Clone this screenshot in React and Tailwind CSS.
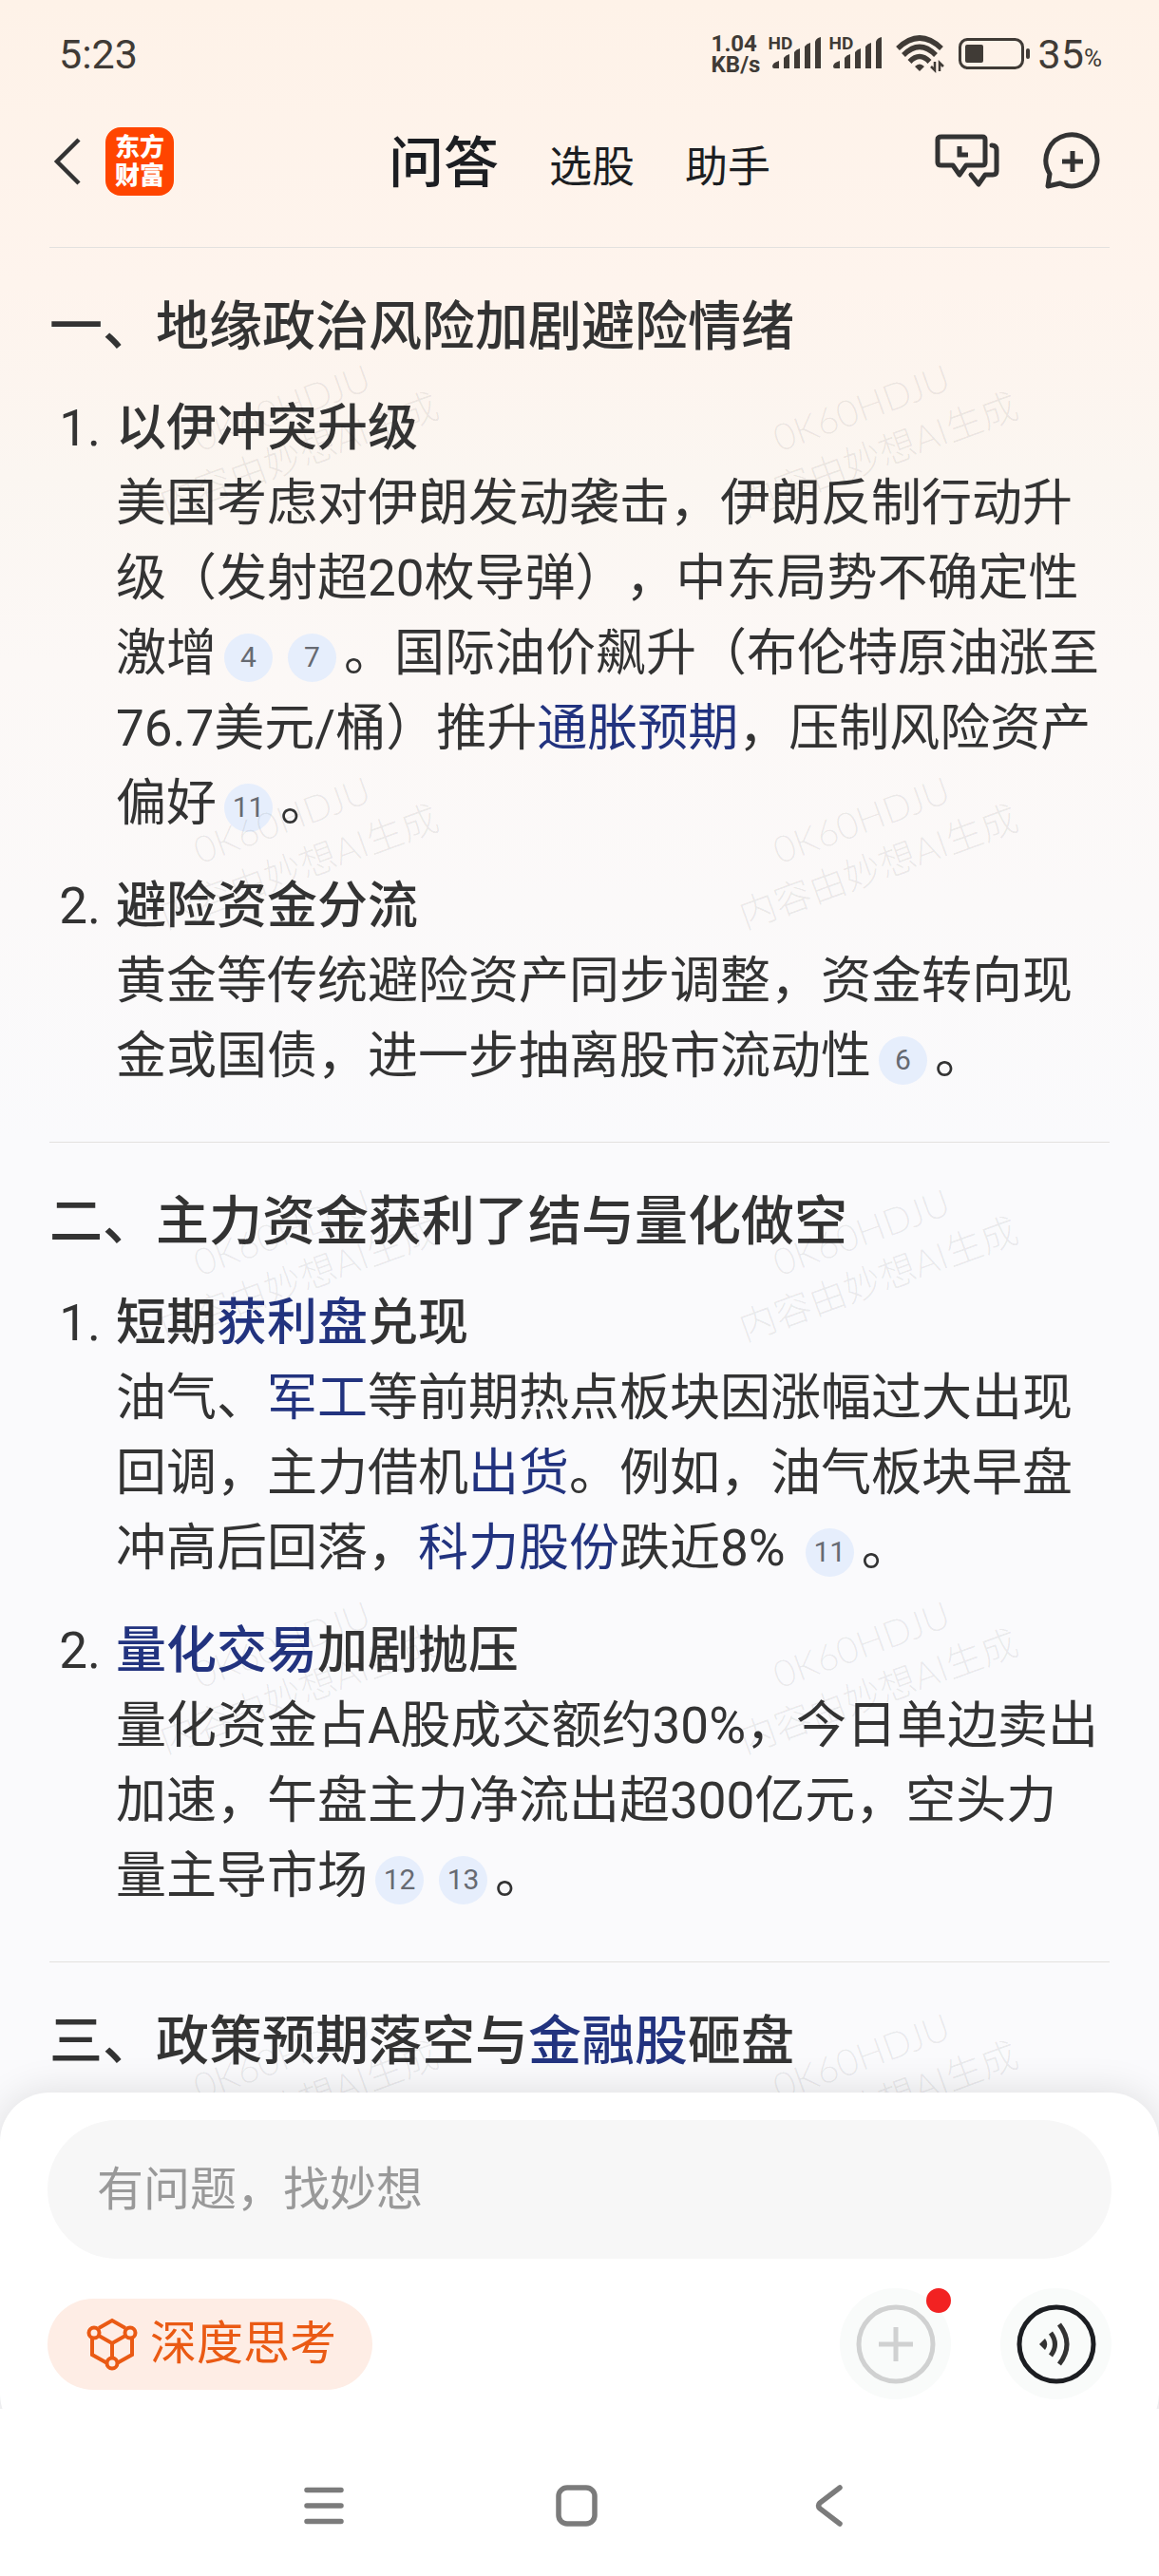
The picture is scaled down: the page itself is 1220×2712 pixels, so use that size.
const sections = [
  {
    title: ["一、地缘政治风险加剧避险情绪"],
    items: [
      {
        title: ["以伊冲突升级"],
        body: [
          "美国考虑对伊朗发动袭击，伊朗反制行动升级（发射超20枚导弹），中东局势不确定性激增",
          { refs: [4, 7] },
          "。国际油价飙升（布伦特原油涨至76.7美元/桶）推升",
          { link: "通胀预期" },
          "，压制风险资产偏好",
          { refs: [11] },
          "。",
        ],
      },
      {
        title: ["避险资金分流"],
        body: [
          "黄金等传统避险资产同步调整，资金转向现金或国债，进一步抽离股市流动性",
          { refs: [6] },
          "。",
        ],
      },
    ],
  },
  {
    title: ["二、主力资金获利了结与量化做空"],
    items: [
      {
        title: ["短期", { link: "获利盘" }, "兑现"],
        body: [
          "油气、",
          { link: "军工" },
          "等前期热点板块因涨幅过大出现回调，主力借机",
          { link: "出货" },
          "。例如，油气板块早盘冲高后回落，",
          { link: "科力股份" },
          "跌近8% ",
          { refs: [11] },
          "。",
        ],
      },
      {
        title: [{ link: "量化交易" }, "加剧抛压"],
        body: [
          "量化资金占A股成交额约30%，今日单边卖出加速，午盘主力净流出超300亿元，空头力量主导市场",
          { refs: [12, 13] },
          "。",
        ],
      },
    ],
  },
  {
    title: ["三、政策预期落空与", { link: "金融股" }, "砸盘"],
    items: [],
  },
];

const tabs = ["问答", "选股", "助手"];

// Plain strings, stock/term links and numbered source badges
function RichText({ parts }) {
  return parts.map((part, i) => {
    if (typeof part === "string") return part;
    if (part.link) {
      return (
        <a key={i} href="#" className="text-[#22337f]">
          {part.link}
        </a>
      );
    }
    return part.refs.map((n) => (
      <button
        key={n}
        className="mx-2 inline-flex size-[51px] items-center justify-center rounded-full bg-[#e6eefc] align-[4px] text-[30px] leading-none text-[#666a72]"
      >
        {n}
      </button>
    ));
  });
}

function Signal() {
  return (
    <div className="relative h-10 w-[56px]">
      <span className="absolute left-0 top-0 text-[19px] font-bold leading-[18px]">HD</span>
      <svg className="absolute bottom-1 right-0" width="52" height="34" viewBox="0 0 52 34" fill="currentColor">
        <path d="M0 31Q0 27 7 25V33H2Q0 33 0 31ZM12 22Q14 19 18 18V33H12ZM23 16Q25 13 29 12V33H23ZM34 10Q36 7 40 6V33H34ZM45 5Q46 1 51 0V33H45Z" />
      </svg>
    </div>
  );
}

function StatusBar() {
  return (
    <div className="flex h-[114px] items-center justify-between pl-[62px] pr-[60px] font-['Roboto'] text-[#403b36]">
      <span className="text-[43px]">5:23</span>
      <div className="flex items-center">
        <div className="w-[60px] text-[24px] font-bold leading-[22px]">
          <div>1.04</div>
          <div>KB/s</div>
        </div>
        <Signal />
        <div className="w-2" />
        <Signal />
        <svg className="ml-3.5" width="52" height="40" viewBox="0 0 52 40" fill="none" stroke="currentColor" strokeWidth="5.500">
          <path d="M2 14Q25 -8 48 14" />
          <path d="M8 21Q25 4 42 21" />
          <path d="M14.500 28Q25 17 35.500 28" />
          <path d="M20 33Q25 28 30 33L25 38Z" fill="currentColor" stroke="none" />
          <path d="M41 28V37L37 33M46 38V29L50 33" strokeWidth="2.500" />
        </svg>
        <svg className="ml-3.5" width="78" height="34" viewBox="0 0 78 34" fill="none">
          <rect x="1.500" y="1.500" width="66" height="30" rx="8" stroke="currentColor" strokeWidth="3" />
          <rect x="7" y="7" width="19" height="19" rx="2" fill="currentColor" />
          <rect x="71" y="11" width="4" height="11" rx="2" fill="currentColor" />
        </svg>
        <span className="ml-1.5 text-[43px]">35</span>
        <span className="pt-2 text-[26px]">%</span>
      </div>
    </div>
  );
}

function Header() {
  return (
    <header className="grid h-[146px] grid-cols-[1fr_auto_1fr] items-start px-[52px] pt-5">
      <div className="flex items-center gap-6">
        <button aria-label="返回">
          <svg width="35" height="72" viewBox="0 0 35 72" fill="none" stroke="#333" strokeWidth="4.500">
            <path d="M31 13L8 36L31 59" />
          </svg>
        </button>
        <div className="flex size-[72px] flex-col items-center justify-center rounded-2xl bg-[#ff4500] text-[26px] font-black leading-[30px] text-white">
          <span>东方</span>
          <span>财富</span>
        </div>
      </div>
      <nav className="flex items-baseline gap-[53px] pt-0.5 text-[45px] leading-[72px] text-[#1c1e22]">
        {tabs.map((tab, i) => (
          <button key={tab} className={i === 0 ? "text-[58px] font-medium" : ""}>
            {tab}
          </button>
        ))}
      </nav>
      <div className="flex items-center justify-end gap-11 pr-2 text-[#333]">
        <button aria-label="历史会话">
          <svg width="70" height="72" viewBox="0 0 70 72" fill="none" stroke="currentColor" strokeWidth="5" strokeLinejoin="round" strokeLinecap="round">
            <path d="M7 10H50Q53 10 53 13V37Q53 40 50 40H33L26 50L19 40H7Q3 40 3 37V13Q3 10 7 10Z" />
            <path d="M26 20V29H35" strokeLinecap="butt" strokeLinejoin="miter" />
            <path d="M60 19Q65 19 65 24V46Q65 50 61 50H53L46 60L38 50" />
          </svg>
        </button>
        <button aria-label="新建会话">
          <svg width="62" height="72" viewBox="0 0 62 72" fill="none" stroke="currentColor" strokeWidth="5" strokeLinejoin="round">
            <path d="M5 62L7 49A27 27 0 1 1 18 59Z" />
            <path d="M31 25V47M20 36H42" />
          </svg>
        </button>
      </div>
    </header>
  );
}

function Section({ title, items }) {
  return (
    <section className="mb-[50px] border-t border-[#e3e1df] pt-11">
      <h2 className="mb-7 text-[56px] font-medium leading-[79px]">
        <RichText parts={title} />
      </h2>
      <ol className="flex flex-col gap-[29px] pr-1 text-[53px] leading-[79px]">
        {items.map((item, i) => (
          <li key={i} className="flex">
            <span className="w-[70px] shrink-0 pr-4 text-right">{i + 1}.</span>
            <div className="min-w-0 flex-1">
              <h3 className="font-medium">
                <RichText parts={item.title} />
              </h3>
              <p>
                <RichText parts={item.body} />
              </p>
            </div>
          </li>
        ))}
      </ol>
    </section>
  );
}

function Watermark() {
  return (
    <div className="pointer-events-none absolute inset-x-0 -top-6 grid auto-rows-[434px] grid-cols-2 place-items-center">
      {Array.from({ length: 10 }, (_, i) => (
        <div key={i} className="-rotate-20 whitespace-nowrap text-center font-['Lato','Noto_Sans_CJK_SC',sans-serif] text-[39px] font-light leading-[52px] text-black/7">
          <div>0K60HDJU</div>
          <div>内容由妙想AI生成</div>
        </div>
      ))}
    </div>
  );
}

function Composer() {
  return (
    <form className="rounded-[52px] bg-white px-[50px] pb-[46px] pt-[29px] shadow-[0_0_40px_rgba(0,0,0,0.12)]">
      <input
        aria-label="提问"
        placeholder="有问题，找妙想"
        className="h-[146px] w-full rounded-full bg-[#f7f7f7] px-[52px] text-[49px] outline-none placeholder:text-[#999]"
      />
      <div className="mt-[31px] flex items-center justify-between">
        <button type="button" className="flex h-24 items-center gap-3 rounded-full bg-[#feede5] pl-10 pr-[38px] text-[49px] text-[#ea5a14]">
          <svg width="56" height="58" viewBox="0 0 56 58" fill="none" stroke="currentColor" strokeWidth="4">
            <path d="M14 12L28 4L42 12M7 23V40L23 49M49 23V40L33 49M14 20L28 28L42 20M28 28V43" />
            <circle cx="9" cy="17" r="5.500" />
            <circle cx="47" cy="17" r="5.500" />
            <circle cx="28" cy="49" r="5.500" />
          </svg>
          深度思考
        </button>
        <div className="flex gap-[52px]">
          <button type="button" aria-label="添加" className="relative flex size-[117px] items-center justify-center rounded-full bg-[#f9fbfa]">
            <svg width="84" height="84" viewBox="0 0 84 84" fill="none" stroke="#d0d1d1" strokeWidth="5">
              <circle cx="42" cy="42" r="39" />
              <path d="M42 24V60M24 42H60" />
            </svg>
            <span className="absolute right-0 top-0 size-[26px] rounded-full bg-[#f22222]" />
          </button>
          <button type="button" aria-label="语音" className="flex size-[117px] items-center justify-center rounded-full bg-[#f9fbfa]">
            <svg width="84" height="84" viewBox="0 0 84 84" fill="none" stroke="#333" strokeWidth="5">
              <circle cx="42" cy="42" r="39" stroke="#1c1e22" />
              <path d="M24 42L30 36Q34.500 42 30 48Z" fill="#333" stroke="none" />
              <path d="M36 30Q45 42 36 54M45 21Q61 42 45 63" />
            </svg>
          </button>
        </div>
      </div>
    </form>
  );
}

function SystemNav() {
  return (
    <div className="relative -mt-9 flex h-44 items-start justify-center gap-[218px] bg-white pr-1.5 pt-[78px] text-[#7b7b7b]">
      <button aria-label="菜单">
        <svg width="48" height="48" viewBox="0 0 48 48" fill="none" stroke="currentColor" strokeWidth="5.500" strokeLinecap="round">
          <path d="M6 7.500H42M6 24H42M6 40.500H42" />
        </svg>
      </button>
      <button aria-label="主页">
        <svg width="48" height="48" viewBox="0 0 48 48" fill="none" stroke="currentColor" strokeWidth="5.500">
          <rect x="5" y="5" width="38" height="38" rx="9" />
        </svg>
      </button>
      <button aria-label="后退">
        <svg width="48" height="48" viewBox="0 0 48 48" fill="none" stroke="currentColor" strokeWidth="5.500" strokeLinecap="round">
          <path d="M35 5L14 21Q11 24 14 27L35 43" />
        </svg>
      </button>
    </div>
  );
}

export default function App() {
  return (
    <div className="flex h-screen flex-col overflow-hidden bg-[linear-gradient(#fef2e8_0px,#fef4ed_300px,#fbf6f1_500px,#fcf8f6_700px,#fafafc_1200px)] font-['Roboto','Noto_Sans_CJK_SC',sans-serif] text-[#333] [text-spacing-trim:space-all]">
      <StatusBar />
      <Header />
      <main className="relative min-h-0 flex-1 overflow-hidden px-[52px]">
        {sections.map((section, i) => (
          <Section key={i} {...section} />
        ))}
        <Watermark />
      </main>
      <Composer />
      <SystemNav />
    </div>
  );
}
